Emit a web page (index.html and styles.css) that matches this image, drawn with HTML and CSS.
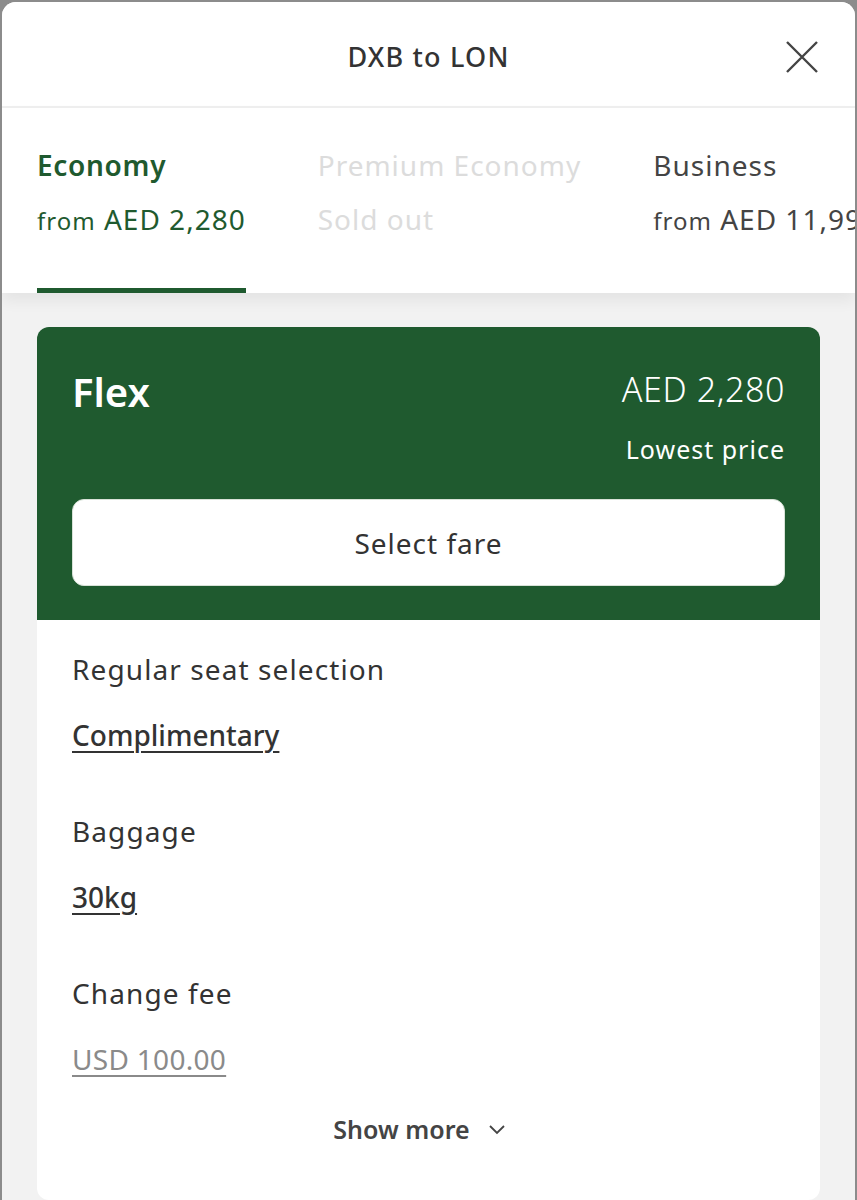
FILE: index.html
```html
<!DOCTYPE html>
<html lang="en">
<head>
    <meta charset="UTF-8">
    <meta name="viewport" content="width=device-width, initial-scale=1.0">
    <title>DXB to LON</title>
    <link rel="stylesheet" href="styles.css">
</head>
<body>
    <div class="sheet">
        <header class="top-bar">
            <div class="title">DXB to LON</div>
            <button class="close" aria-label="Close">
                <svg width="34" height="34" viewBox="0 0 34 34">
                    <path d="M2 2 L32 32 M32 2 L2 32" stroke="#444" stroke-width="2.4" fill="none"/>
                </svg>
            </button>
        </header>

        <div class="tabs">
            <div class="tab active">
                <div class="tab-name">Economy</div>
                <div class="tab-price"><span class="from">from</span> AED 2,280</div>
            </div>
            <div class="tab disabled">
                <div class="tab-name">Premium Economy</div>
                <div class="tab-price">Sold out</div>
            </div>
            <div class="tab">
                <div class="tab-name">Business</div>
                <div class="tab-price"><span class="from">from</span> AED 11,995</div>
            </div>
        </div>

        <div class="content">
            <div class="fare-card">
                <div class="fare-head">
                    <div class="fare-row">
                        <div class="fare-name">Flex</div>
                        <div class="fare-price">AED 2,280</div>
                    </div>
                    <div class="fare-note">Lowest price</div>
                    <button class="select-button">Select fare</button>
                </div>
                <div class="fare-body">
                    <div class="feature">
                        <div class="feature-label">Regular seat selection</div>
                        <a class="feature-value" href="#">Complimentary</a>
                    </div>
                    <div class="feature">
                        <div class="feature-label">Baggage</div>
                        <a class="feature-value" href="#">30kg</a>
                    </div>
                    <div class="feature">
                        <div class="feature-label">Change fee</div>
                        <a class="feature-value muted" href="#">USD 100.00</a>
                    </div>
                    <button class="show-more">
                        Show more
                        <svg width="18" height="12" viewBox="0 0 18 12">
                            <path d="M2 3 L9 10 L16 3" stroke="#444" stroke-width="1.8" fill="none"/>
                        </svg>
                    </button>
                </div>
            </div>
        </div>
    </div>
</body>
</html>
```

FILE: styles.css
```css
/* Fare selection sheet */
html, body {
    height: 100%;
}

body {
    margin: 0;
    padding: 2px 2px 0 2px;
    box-sizing: border-box;
    background-color: #8c8c8c;
    font-family: 'Noto Sans', 'Open Sans', sans-serif;
    color: #333;
    overflow: hidden;
}

.sheet {
    height: 100%;
    background-color: #f2f2f2;
    border-radius: 14px 14px 0 0;
    overflow: hidden;
    display: flex;
    flex-direction: column;
}

.top-bar {
    height: 104px;
    flex-shrink: 0;
    background-color: #fff;
    border-bottom: 2px solid #efefef;
    display: flex;
    align-items: center;
    justify-content: center;
    position: relative;
}

.title {
    font-size: 27px;
    font-weight: 500;
    color: #333;
    letter-spacing: 1.2px;
    margin-top: 4px;
}

.close {
    position: absolute;
    right: 36px;
    top: 38px;
    padding: 0;
    border: none;
    background: none;
    cursor: pointer;
}

.tabs {
    background-color: #fff;
    display: flex;
    gap: 72px;
    padding: 0 0 0 35px;
    box-shadow: 0 8px 14px rgba(0, 0, 0, 0.06);
    position: relative;
    white-space: nowrap;
}

.tab {
    padding: 37px 0 47px;
    border-bottom: 5px solid transparent;
}

.tab-name {
    font-size: 28px;
    color: #444;
    line-height: 40px;
    letter-spacing: 1px;
}

.tab-price {
    font-size: 28px;
    color: #444;
    line-height: 40px;
    margin-top: 14px;
    letter-spacing: 1px;
}

.from {
    font-size: 24px;
}

.tab.active {
    border-bottom-color: #1f5a2f;
}

.tab.active .tab-name {
    font-weight: 600;
    color: #1f5a2f;
    letter-spacing: 0.7px;
}

.tab.active .tab-price {
    color: #1f5a2f;
}

.tab.disabled .tab-name,
.tab.disabled .tab-price {
    color: #dcdcdc;
}

.content {
    padding: 34px 35px 0 35px;
}

.fare-card {
    background-color: #fff;
    border-radius: 12px;
    overflow: hidden;
}

.fare-head {
    background-color: #1f5a2f;
    padding: 36px 35px 34px 35px;
    color: #fff;
}

.fare-row {
    display: flex;
    justify-content: space-between;
    align-items: flex-start;
}

.fare-name {
    font-size: 40px;
    font-weight: 600;
    line-height: 58px;
}

.fare-price {
    font-size: 34px;
    font-weight: 300;
    line-height: 52px;
    letter-spacing: 0.6px;
}

.fare-note {
    text-align: right;
    font-size: 25px;
    font-weight: 400;
    margin-top: 10px;
    line-height: 36px;
    letter-spacing: 1px;
}

.select-button {
    display: block;
    width: 100%;
    height: 87px;
    margin-top: 32px;
    background-color: #fff;
    border: 1px solid #d8e2d8;
    border-radius: 12px;
    font-family: inherit;
    font-size: 28px;
    letter-spacing: 1px;
    color: #333;
    cursor: pointer;
}

.fare-body {
    padding: 27px 35px 54px 35px;
}

.feature {
    margin-bottom: 52px;
}

.feature-label {
    font-size: 28px;
    line-height: 44px;
    color: #333;
    letter-spacing: 1.1px;
}

.feature-value {
    display: inline-block;
    margin-top: 22px;
    font-size: 28px;
    line-height: 44px;
    font-weight: 500;
    color: #333;
    text-decoration: underline;
    text-underline-offset: 5px;
    text-decoration-thickness: 2px;
}

.feature-value.muted {
    color: #8a8a8a;
    font-weight: 400;
    letter-spacing: 0.3px;
}

.show-more {
    display: flex;
    align-items: center;
    gap: 18px;
    margin: -21px auto 0;
    padding: 0 18px 0 0;
    border: none;
    background: none;
    font-family: inherit;
    font-size: 25px;
    font-weight: 600;
    color: #444;
    cursor: pointer;
}
```
